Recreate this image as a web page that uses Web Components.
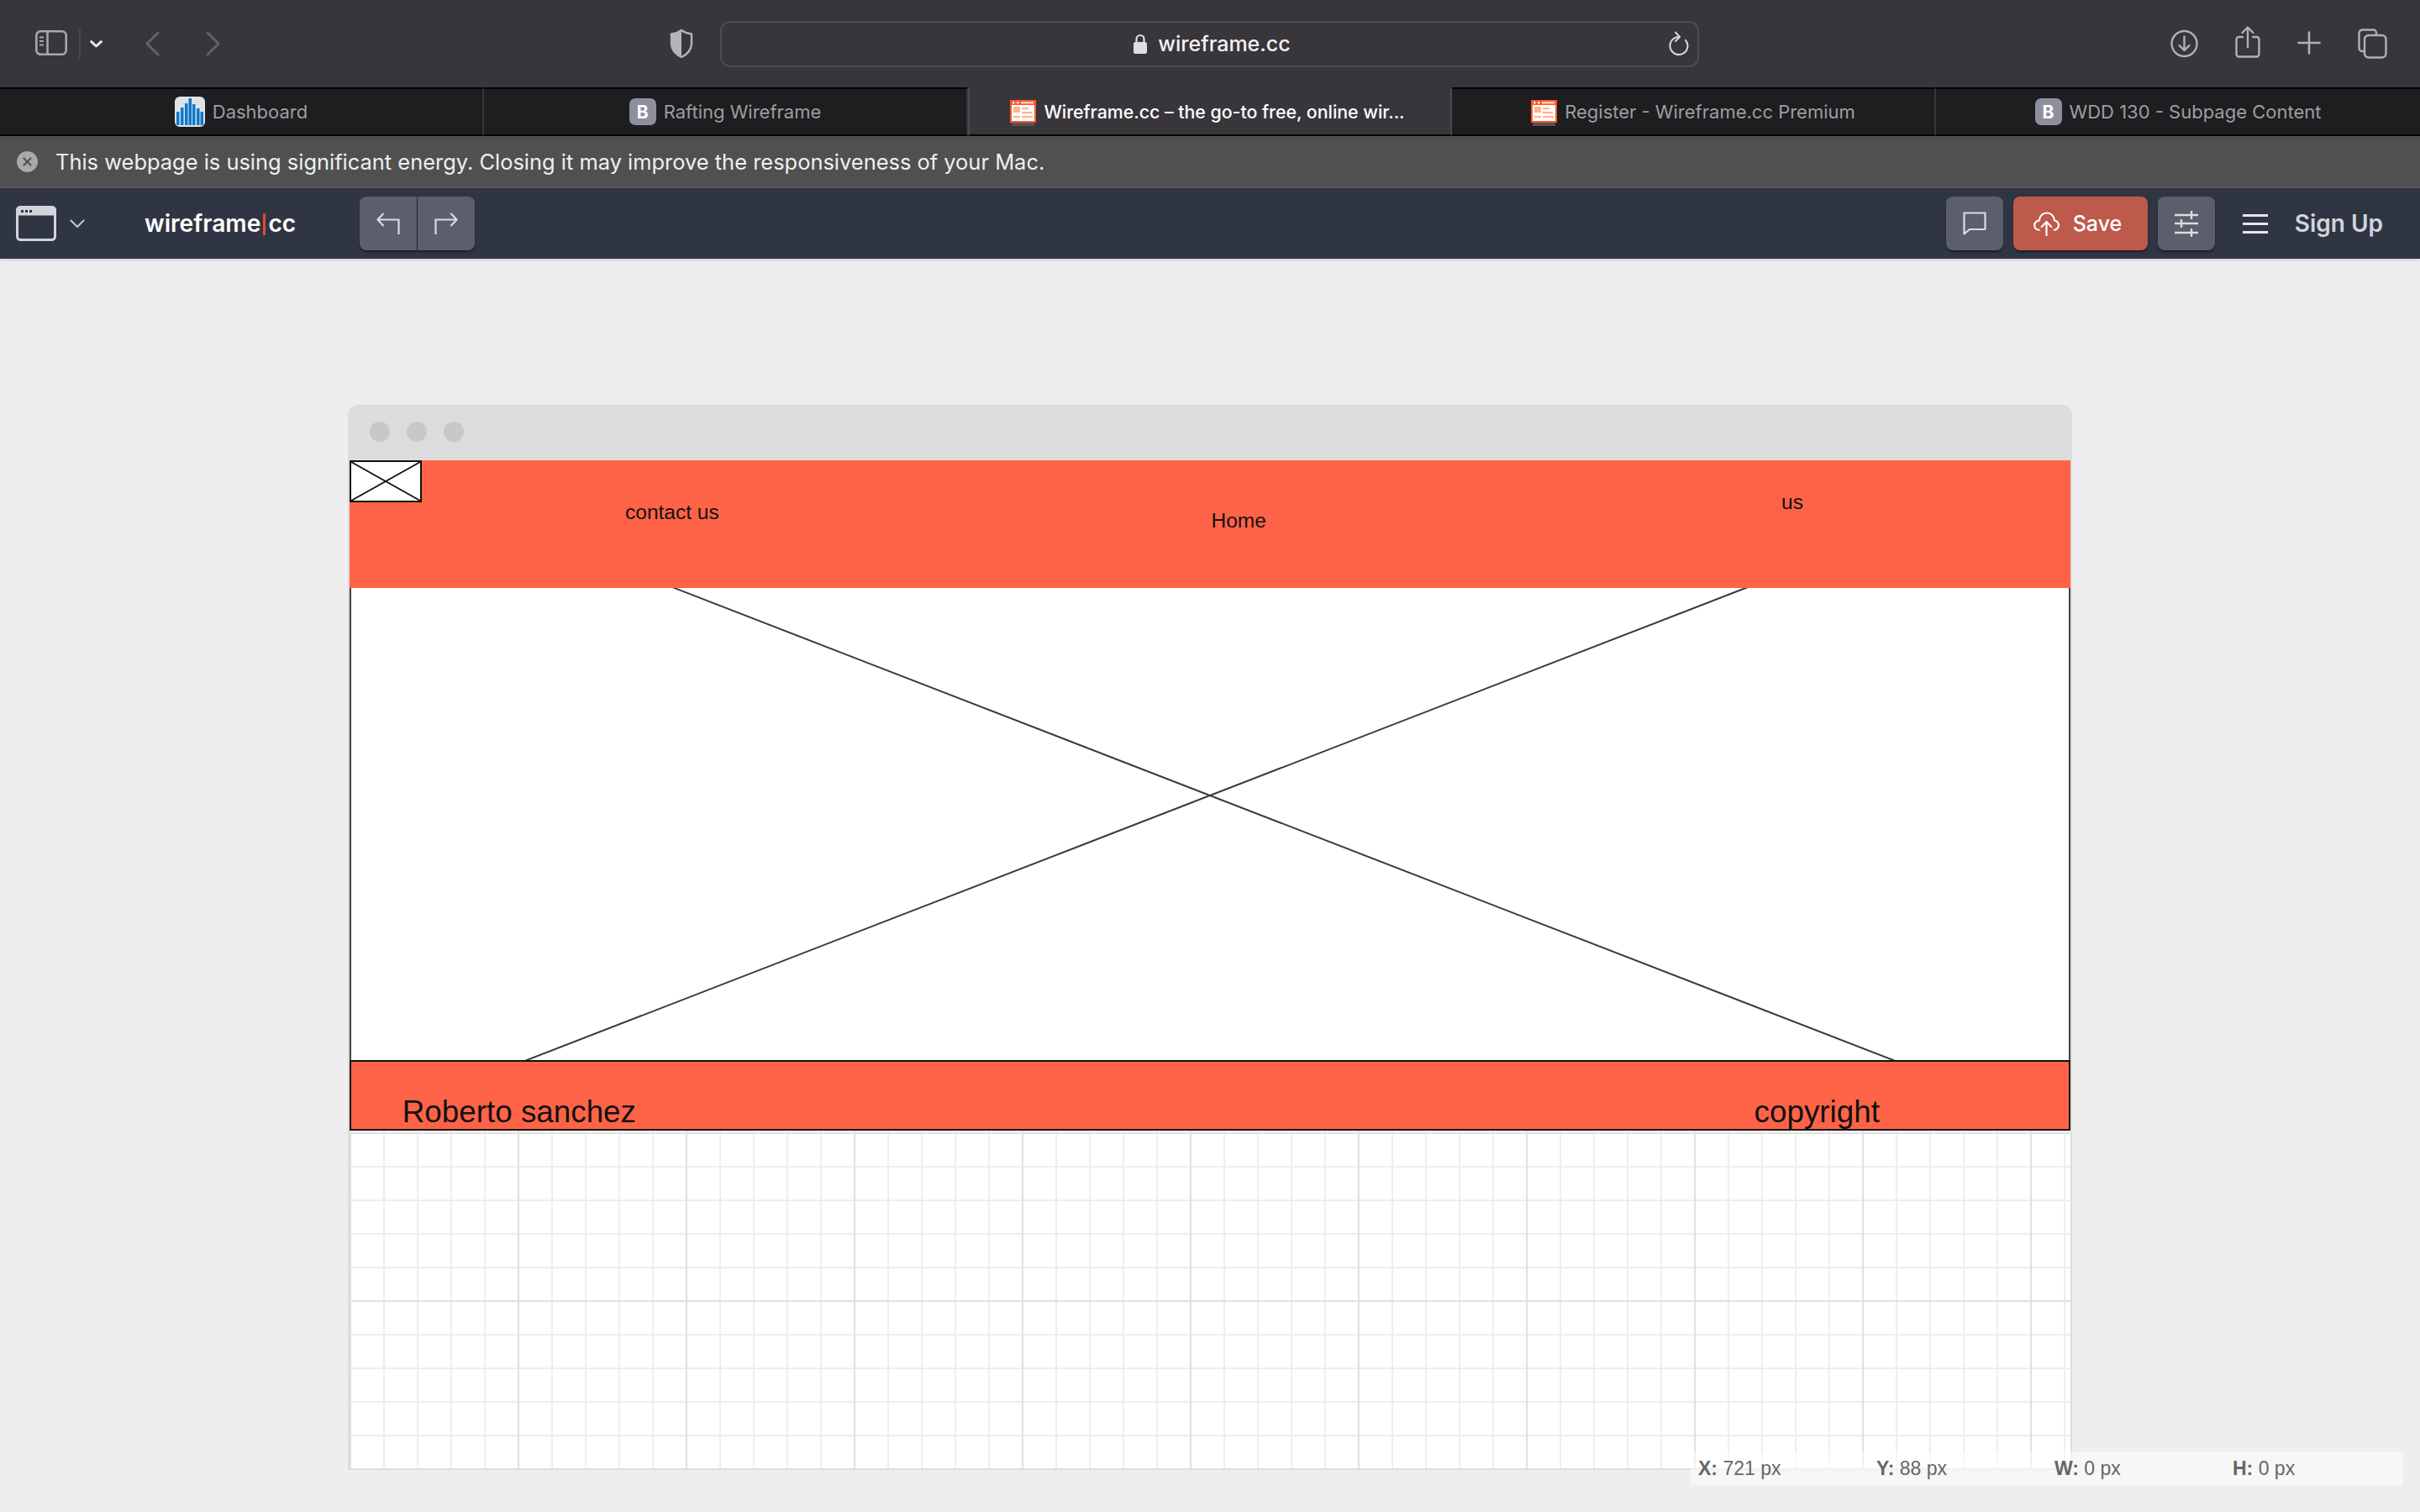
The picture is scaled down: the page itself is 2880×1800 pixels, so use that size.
<!DOCTYPE html>
<html lang="en">
<head>
<meta charset="utf-8">
<title>Wireframe.cc</title>
<style>
html,body{margin:0;padding:0;width:2880px;height:1800px;overflow:hidden;background:#eee;font-family:Inter,"Liberation Sans",sans-serif}
body{display:flex;flex-direction:column;position:relative}
</style>
</head>
<body>
<safari-toolbar></safari-toolbar>
<tab-strip>
  <tab-item><dash-favicon slot="icon"></dash-favicon>Dashboard</tab-item>
  <tab-item><b-favicon slot="icon"></b-favicon>Rafting Wireframe</tab-item>
  <tab-item active><wf-favicon slot="icon"></wf-favicon>Wireframe.cc – the go-to free, online wir...</tab-item>
  <tab-item><wf-favicon slot="icon"></wf-favicon>Register - Wireframe.cc Premium</tab-item>
  <tab-item last><b-favicon slot="icon"></b-favicon>WDD 130 - Subpage Content</tab-item>
</tab-strip>
<energy-banner>This webpage is using significant energy. Closing it may improve the responsiveness of your Mac.</energy-banner>
<wf-toolbar></wf-toolbar>
<wf-stage>
  <wf-window>
    <wf-image style="left:0;top:3px;width:2048px;height:792px"></wf-image>
    <wf-block style="left:0;top:0;width:2048px;height:152px"></wf-block>
    <wf-placeholder style="left:0;top:0;width:86px;height:50px"></wf-placeholder>
    <wf-label style="left:328px;top:47.8px">contact us</wf-label>
    <wf-label style="left:1025.5px;top:57.8px">Home</wf-label>
    <wf-label style="left:1704px;top:35.8px">us</wf-label>
    <wf-block bordered style="left:0;top:714px;width:2048px;height:84px"></wf-block>
    <wf-label big style="left:62.8px;top:755.4px">Roberto sanchez</wf-label>
    <wf-label big style="left:1671.6px;top:755.4px">copyright</wf-label>
  </wf-window>
</wf-stage>
<status-readout></status-readout>
<script>
function def(name, html){
  customElements.define(name, class extends HTMLElement{
    constructor(){super();this.attachShadow({mode:'open'}).innerHTML=html;}
  });
}
def('safari-toolbar', `<style>
:host{display:flex;align-items:center;height:104px;background:#38363b;flex:none;box-sizing:border-box}
svg{display:block;flex:none;fill:none}
.url{flex:none;box-sizing:border-box;width:1165px;height:55px;margin-left:32px;padding-left:6px;border:2px solid #4d4c51;border-radius:12px;display:flex;align-items:center;justify-content:center;position:relative;color:#f2f2f3;font:500 25px Inter,"Liberation Sans",sans-serif}
.url .lock{margin-right:13px}
.url .reload{position:absolute;right:10px;top:10px}
.div{width:2px;height:36px;background:#4a494e;flex:none}
</style>
<svg style="margin-left:42px;margin-top:-2px" width="38" height="30" viewBox="0 0 38 30" stroke="#a8a7ab" stroke-width="2.6"><rect x="1.3" y="1.3" width="35.4" height="27.4" rx="5"/><path d="M14.5 1.3V28.7"/><path d="M5 8.5h5M5 13h5M5 17.5h5" stroke-width="2"/></svg>
<div class="div" style="margin-left:14px"></div>
<svg style="margin-left:11px" width="15" height="9" viewBox="0 0 15 9" stroke="#e9e9ea" stroke-width="3" stroke-linecap="round" stroke-linejoin="round"><path d="M1.7 1.7 7.5 7 13.3 1.7"/></svg>
<svg style="margin-left:51px" width="17" height="30" viewBox="0 0 17 30" stroke="#626165" stroke-width="3" stroke-linecap="round" stroke-linejoin="round"><path d="M15 2 2 15 15 28"/></svg>
<svg style="margin-left:55px" width="17" height="30" viewBox="0 0 17 30" stroke="#626165" stroke-width="3" stroke-linecap="round" stroke-linejoin="round"><path d="M2 2 15 15 2 28"/></svg>
<svg style="margin-left:535px" width="28" height="34" viewBox="0 0 28 34"><path d="M14 1C10 4 6 5 2 5.5V17c0 8 6 13 12 16 6-3 12-8 12-16V5.5C22 5 18 4 14 1Z" stroke="#b4b3b8" stroke-width="2.4"/><path d="M14 1C10 4 6 5 2 5.5V17c0 8 6 13 12 16Z" fill="#b4b3b8"/></svg>
<div class="url">
  <svg class="lock" width="16" height="24" viewBox="0 0 16 24"><path d="M3.5 11V6.5a4.5 4.5 0 0 1 9 0V11" stroke="#dfdfe0" stroke-width="2.2"/><rect x="0" y="10" width="16" height="14" rx="2.5" fill="#dfdfe0"/></svg>
  <span>wireframe.cc</span>
  <svg class="reload" width="24" height="30" viewBox="0 0 24 30" stroke="#d8d8da" stroke-width="2" stroke-linecap="round" stroke-linejoin="round"><path d="M12 7A10.500 10.500 0 1 0 20 10.800"/><path d="M8 1.500 13 7 8 12"/></svg>
</div>
<svg style="margin-left:561px" width="33" height="34" viewBox="0 0 33 34" stroke="#b1b0b4" stroke-width="2.4" stroke-linecap="round" stroke-linejoin="round"><circle cx="16.5" cy="17" r="15"/><path d="M16.5 8.5V25M10.5 19l6 6 6-6"/></svg>
<svg style="margin-left:44px;margin-top:-5px" width="30" height="38" viewBox="0 0 30 38" stroke="#b1b0b4" stroke-width="2.4" stroke-linecap="round" stroke-linejoin="round"><path d="M9 13H4.5A3 3 0 0 0 1.5 16v17.5a3 3 0 0 0 3 3h21a3 3 0 0 0 3-3V16a3 3 0 0 0-3-3H21"/><path d="M15 25V2M8.5 8 15 1.5 21.5 8"/></svg>
<svg style="margin-left:44px;margin-top:-2px" width="28" height="28" viewBox="0 0 28 28" stroke="#b1b0b4" stroke-width="2.6" stroke-linecap="round"><path d="M14 1.5v25M1.5 14h25"/></svg>
<svg style="margin-left:44px" width="35" height="36" viewBox="0 0 35 36" stroke="#b1b0b4" stroke-width="2.4" stroke-linejoin="round"><path d="M7 27H5a3.5 3.5 0 0 1-3.5-3.5v-18A4 4 0 0 1 5.500 1.500h13A3.500 3.500 0 0 1 22 5v3"/><rect x="8" y="8" width="25.500" height="26.500" rx="5"/></svg>
`);
def('tab-strip', `<style>:host{display:flex;flex:none;height:58px}</style><slot></slot>`);
def('tab-item', `<style>
:host{flex:none;width:576px;display:flex;align-items:center;justify-content:center;gap:9px;box-sizing:border-box;height:58px;background:#1e1d20;color:#9d9da0;border-top:2px solid #000;border-bottom:2px solid #000;border-right:2px solid #38363b;font:400 22px Inter,"Liberation Sans",sans-serif;white-space:nowrap}
:host([active]){background:#38363b;color:#fff;font-weight:500;font-size:21.3px;padding-right:6px;border-top-color:#38363b;border-left:2px solid #4a494e;border-right:2px solid #4a494e}
:host([last]){border-right:0}
</style><slot name="icon"></slot><span><slot></slot></span>`);
def('dash-favicon', `<style>:host{display:block;width:36px;height:36px;flex:none}svg{display:block}</style>
<svg width="36" height="36" viewBox="0 0 36 36"><rect width="36" height="36" rx="6" fill="#dfe3e6"/><g fill="#0c78cd"><rect x="2" y="18" width="3.500" height="16"/><rect x="7" y="13" width="3.500" height="21"/><rect x="12" y="8" width="3.500" height="26"/><rect x="16.500" y="2" width="3.500" height="32"/><rect x="21" y="9" width="3.500" height="25"/><rect x="26" y="14" width="3.500" height="20"/><rect x="30.500" y="18" width="3.500" height="16"/></g></svg>`);
def('b-favicon', `<style>:host{display:flex;align-items:center;justify-content:center;width:32px;height:32px;flex:none;border-radius:7px;background:#8e8f9c;color:#fff;font:700 21px Inter,"Liberation Sans",sans-serif;line-height:1}</style>B`);
def('wf-favicon', `<style>:host{display:block;width:31px;height:31px;flex:none;margin-top:2px}svg{display:block}</style>
<svg width="31" height="31" viewBox="0 0 31 31"><rect x="2" y="27" width="27" height="4" fill="#59504f"/><rect x="0" y="0" width="31" height="27" fill="#f9582c"/><rect x="2" y="6" width="27" height="19" fill="#fff"/><rect x="3" y="2" width="2.500" height="2.500" fill="#ffe4d8"/><rect x="8" y="2" width="2.500" height="2.500" fill="#ffe4d8"/><rect x="13" y="2" width="15" height="2.500" fill="#ffc9b3"/><rect x="4" y="8" width="8" height="7" fill="#fbb48f"/><rect x="14" y="9" width="8" height="2.200" fill="#fbb48f"/><rect x="14" y="14" width="12" height="2.200" fill="#fbb48f"/><rect x="4" y="19" width="8" height="2.200" fill="#fbb48f"/><rect x="14" y="19" width="13" height="2.200" fill="#fbb48f"/></svg>`);
def('energy-banner', `<style>
:host{display:flex;align-items:center;flex:none;height:60px;background:#505050;border-bottom:2px solid #5b5b5b;color:#efefef;font:400 25.44px Inter,"Liberation Sans",sans-serif;white-space:nowrap}
svg{display:block;margin:0 21px 0 20px;flex:none}
</style><svg width="25" height="25" viewBox="0 0 25 25"><circle cx="12.500" cy="12.500" r="12.500" fill="#a9a9a9"/><path d="M8.500 8.500l8 8M16.500 8.500l-8 8" stroke="#505050" stroke-width="2.200" stroke-linecap="round"/></svg><span><slot></slot></span>`);
def('wf-toolbar', `<style>
:host{display:flex;align-items:center;flex:none;height:84px;background:#2f3542;color:#d1d5db;box-shadow:0 1px 4px rgba(0,0,0,.18);position:relative;z-index:1;font-family:Inter,"Liberation Sans",sans-serif}
svg{display:block;flex:none;fill:none}
.logo{margin-left:71px;color:#fff;font-weight:600;font-size:28.2px;display:flex;align-items:center;white-space:nowrap}
.logo i{display:block;width:3px;height:26px;background:#e5482f;margin:2px 3px 0}
.btn{box-sizing:border-box;height:64px;background:#5a5f6b;border-radius:8px;box-shadow:0 2px 2px rgba(0,0,0,.45);display:flex;align-items:center;justify-content:center;flex:none}
.sq{width:68px}
.group{display:flex;margin-left:76px;gap:1px}
.group .a{border-radius:8px 0 0 8px;width:68px}
.group .b{border-radius:0 8px 8px 0;width:68px}
.save{width:160px;background:#bd5a4c;color:#fff;font-size:25px;font-weight:500;gap:16px;margin-left:12px;justify-content:flex-start;padding-left:24px}
.sign{font-size:28px;font-weight:600;margin-left:32px;color:#d1d5db}
</style>
<svg style="margin-left:19px" width="48" height="42" viewBox="0 0 48 42"><rect x="1.500" y="1.500" width="45" height="39" rx="4" stroke="#d1d5db" stroke-width="3"/><path d="M1.500 10V5.500a4 4 0 0 1 4-4h37a4 4 0 0 1 4 4V10Z" fill="#d1d5db" stroke="#d1d5db" stroke-width="3"/><g fill="#2f3542"><rect x="6" y="5" width="3" height="3"/><rect x="11" y="5" width="3" height="3"/><rect x="16" y="5" width="3" height="3"/></g></svg>
<svg style="margin-left:16px" width="18" height="10" viewBox="0 0 18 10" stroke="#c4c8cf" stroke-width="2" stroke-linecap="round" stroke-linejoin="round"><path d="M1.500 1.500 9 9 16.500 1.500"/></svg>
<div class="logo"><span>wireframe</span><i></i><span>cc</span></div>
<div class="group">
  <div class="btn a"><svg width="28" height="26" viewBox="0 0 28 26" stroke="#d9dce1" stroke-width="2.200"><path d="M8.500 1 1.500 8.500 8.500 16M1.500 8.500H26.500V26"/></svg></div>
  <div class="btn b"><svg width="28" height="26" viewBox="0 0 28 26" stroke="#d9dce1" stroke-width="2.200"><path d="M19.500 1 26.500 8.500 19.500 16M26.500 8.500H1.500V26"/></svg></div>
</div>
<div style="flex:1"></div>
<div class="btn sq"><svg width="28" height="28" viewBox="0 0 28 28" stroke="#d9dce1" stroke-width="2.200" stroke-linejoin="round"><path d="M1.500 1.500H26.500V21H8L1.500 26.500Z"/></svg></div>
<div class="btn save"><svg width="31" height="29" viewBox="0 0 32 30" stroke="#fff" stroke-width="2.200" stroke-linecap="round" stroke-linejoin="round"><path d="M7 22.500C3 22.500 1.200 19.500 1.200 16.800 1.200 13.500 4 11 6.800 11 7.500 5.500 11.500 1.500 16.500 1.500c5 0 9 4 9.400 9.300 3 .3 5 3 5 6 0 3-2.400 5.700-5.400 5.700"/><path d="M16 29V13M10 18.500l6-6 6 6"/></svg><span>Save</span></div>
<div class="btn sq" style="margin-left:12px"><svg width="30" height="32" viewBox="0 0 30 32" stroke="#d9dce1" stroke-width="2.400"><path d="M1 6H29M1 16H29M1 27H29M21 1V11M9 11V21M21 22V32"/></svg></div>
<svg style="margin-left:33px" width="30" height="25" viewBox="0 0 30 25" stroke="#e4e6ea" stroke-width="3.200"><path d="M0 2.500H30M0 12.500H30M0 22.500H30"/></svg>
<span class="sign" style="margin-right:44px">Sign Up</span>
`);
def('wf-stage', `<style>:host{display:block;flex:1;padding-top:174px;box-sizing:border-box;background:#eee}</style><slot></slot>`);
def('wf-window', `<style>
:host{display:block;box-sizing:border-box;width:2052px;height:1268px;margin:0 auto;border:2px solid #dedede;border-top:0;border-radius:12px 12px 0 0;overflow:hidden;background:#dcdcdc}
.bar{box-sizing:border-box;height:66px;margin:0 -2px;background:#dcdcdc;display:flex;align-items:center;gap:20px;padding:0 0 2px 26px}
.bar i{display:block;width:24px;height:24px;border-radius:50%;background:#c8c8c8}
.canvas{position:relative;width:2048px;height:1200px;background-color:#fff;background-image:
linear-gradient(to right,#e0e0e0 2px,transparent 2px),linear-gradient(to bottom,#e0e0e0 2px,transparent 2px),
linear-gradient(to right,#eee 2px,transparent 2px),linear-gradient(to bottom,#eee 2px,transparent 2px);
background-size:200px 200px,200px 200px,40px 40px,40px 40px}
</style><div class="bar"><i></i><i></i><i></i></div><div class="canvas"><slot></slot></div>`);
def('wf-image', `<style>
:host{position:absolute;display:block;box-sizing:border-box;background:#fff;border-left:2px solid #444;border-right:2px solid #444}
svg{display:block;width:100%;height:100%}
</style><svg viewBox="0 0 100 100" preserveAspectRatio="none"><path d="M0 0 100 100M100 0 0 100" fill="none" stroke="#3a3a3a" stroke-width="2" vector-effect="non-scaling-stroke"/></svg>`);
def('wf-block', `<style>
:host{position:absolute;display:block;box-sizing:border-box;background:#ff6347}
:host([bordered]){border:2px solid #111}
</style>`);
def('wf-placeholder', `<style>
:host{position:absolute;display:block;box-sizing:border-box;background:#fff;border:2px solid #111}
svg{display:block;width:100%;height:100%}
</style><svg viewBox="0 0 100 100" preserveAspectRatio="none"><path d="M0 0 100 100M100 0 0 100" fill="none" stroke="#111" stroke-width="1.800" vector-effect="non-scaling-stroke"/></svg>`);
def('wf-label', `<style>
:host{position:absolute;display:block;font:400 24.500px "Liberation Sans",Arial,sans-serif;line-height:normal;color:#111;white-space:nowrap}
:host([big]){font-size:36.8px}
</style><slot></slot>`);
def('status-readout', `<style>
:host{position:absolute;left:2012px;top:1728px;width:848px;height:40px;display:grid;grid-template-columns:repeat(4,212px);align-items:center;background:rgba(255,255,255,.5);color:#666;font:400 23px "Liberation Sans",Arial,sans-serif;z-index:2}
span{padding-left:9px;white-space:nowrap}
b{font-weight:700}
</style><span><b>X:</b> 721 px</span><span><b>Y:</b> 88 px</span><span><b>W:</b> 0 px</span><span><b>H:</b> 0 px</span>`);
</script>
</body>
</html>
